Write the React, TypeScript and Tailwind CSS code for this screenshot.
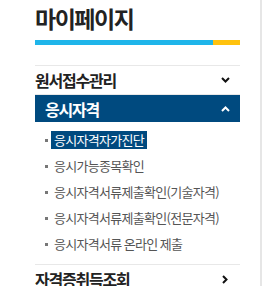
const font = { fontFamily: '"Noto Sans CJK KR", "Noto Sans", sans-serif' };

const subItems = [
  "응시자격자가진단",
  "응시가능종목확인",
  "응시자격서류제출확인(기술자격)",
  "응시자격서류제출확인(전문자격)",
  "응시자격서류 온라인 제출",
];

function Chevron({ dir, color }: { dir: "down" | "up" | "right"; color: string }) {
  if (dir === "right") {
    return (
      <svg width="6" height="9" viewBox="0 0 6 9" fill="none">
        <path d="M1 1l3.5 3.5L1 8" stroke={color} strokeWidth="2" />
      </svg>
    );
  }
  return (
    <svg width="9" height="6" viewBox="0 0 9 6" fill="none">
      {dir === "down" ? (
        <path d="M1 1l3.5 3.5L8 1" stroke={color} strokeWidth="2" />
      ) : (
        <path d="M1 5l3.5-3.5L8 5" stroke={color} strokeWidth="2" />
      )}
    </svg>
  );
}

export default function App() {
  return (
    <div className="w-[262px] h-[286px] overflow-hidden bg-white border-r-2 border-[#e6e6e6]" style={font}>
      <div className="pl-[35px] w-[240px]">
        <h1 className="text-[23px] leading-[36px] font-bold text-[#222] tracking-[-1.5px]">마이페이지</h1>
        <div className="mt-[4px] flex h-[5px]">
          <div className="w-[178px] bg-[#1fb5ea]" />
          <div className="flex-1 bg-[#ffc20e]" />
        </div>

        <nav className="mt-[20px]">
          <div className="border-t border-[#e8e8e8] h-[29px] flex items-center justify-between pr-[10px]">
            <span className="text-[16px] font-bold text-[#222] tracking-[-1.2px]">원서접수관리</span>
            <Chevron dir="down" color="#111" />
          </div>

          <div className="border-t border-[#e8e8e8]">
            <div className="h-[27px] bg-[#004a7f] flex items-center justify-between pl-[10px] pr-[10px]">
              <span className="text-[16px] font-bold text-white tracking-[-1.2px]">응시자격</span>
              <Chevron dir="up" color="#fff" />
            </div>
            <ul className="pt-[5px] pb-[7px]">
              {subItems.map((item, i) => (
                <li key={item} className="h-[26px] flex items-center pl-[10px]">
                  <span className="w-[3px] h-[3px] bg-[#777] mr-[3px]" />
                  <span
                    className={
                      i === 0
                        ? "bg-[#004a7f] text-white text-[13px] leading-[18px] px-[3px] tracking-[-0.7px]"
                        : "text-[#555] text-[13px] leading-[18px] px-[3px] tracking-[-0.7px]"
                    }
                  >
                    {item}
                  </span>
                </li>
              ))}
            </ul>
          </div>

          <div className="border-t border-[#e8e8e8] h-[29px] flex items-center justify-between pr-[12px]">
            <span className="text-[16px] font-bold text-[#222] tracking-[-1.2px]">자격증취득조회</span>
            <Chevron dir="right" color="#111" />
          </div>
        </nav>
      </div>
    </div>
  );
}
